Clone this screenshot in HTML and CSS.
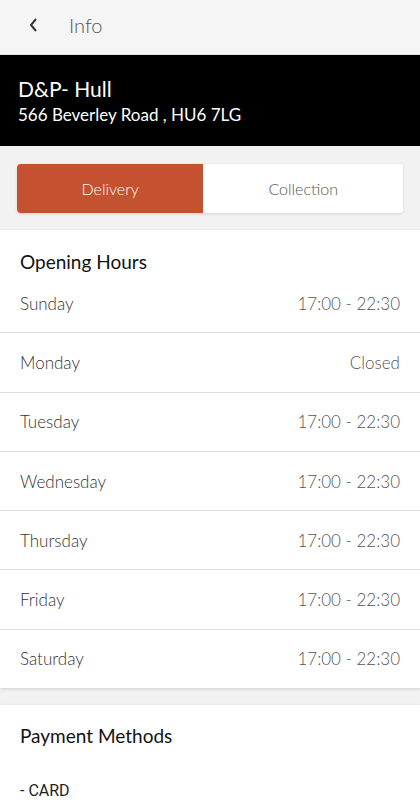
FILE: index.html
```html
<!DOCTYPE html>
<html lang="en">
<head>
<meta charset="UTF-8">
<meta name="viewport" content="width=device-width, initial-scale=1.0">
<title>Info</title>
<link rel="stylesheet" href="styles.css">
</head>
<body>
    <header class="topbar">
        <button class="back" aria-label="Back">
            <svg width="12" height="16" viewBox="0 0 12 16"><path d="M8 2 L3 8 L8 14" fill="none" stroke="#333" stroke-width="2"/></svg>
        </button>
        <span class="topbar-title">Info</span>
    </header>

    <section class="store">
        <h1 class="store-name">D&amp;P- Hull</h1>
        <p class="store-address">566 Beverley Road , HU6 7LG</p>
    </section>

    <div class="tabs">
        <button class="tab active">Delivery</button>
        <button class="tab">Collection</button>
    </div>

    <section class="card">
        <h2 class="card-title">Opening Hours</h2>
        <ul class="hours">
            <li><span>Sunday</span><span>17:00 - 22:30</span></li>
            <li><span>Monday</span><span>Closed</span></li>
            <li><span>Tuesday</span><span>17:00 - 22:30</span></li>
            <li><span>Wednesday</span><span>17:00 - 22:30</span></li>
            <li><span>Thursday</span><span>17:00 - 22:30</span></li>
            <li><span>Friday</span><span>17:00 - 22:30</span></li>
            <li><span>Saturday</span><span>17:00 - 22:30</span></li>
        </ul>
    </section>

    <section class="card payment">
        <h2 class="card-title">Payment Methods</h2>
        <p class="method">- CARD</p>
    </section>
</body>
</html>
```

FILE: styles.css
```css
body {
    font-family: Lato, "Open Sans", sans-serif;
    background-color: #f2f2f2;
    margin: 0;
    color: #333;
}
.topbar {
    display: flex;
    align-items: center;
    height: 55px;
    padding-bottom: 4px;
    box-sizing: border-box;
    background-color: #f5f5f5;
    border-bottom: 1px solid #e2e2e2;
}
.back {
    background: none;
    border: none;
    padding: 0;
    margin-left: 28px;
    width: 12px;
    height: 16px;
    display: flex;
}
.topbar-title {
    margin-left: 29px;
    font-size: 20px;
    font-weight: 300;
    color: #555;
}
.store {
    background-color: #000;
    color: #fff;
    height: 91px;
    padding: 0 18px;
    box-sizing: border-box;
    display: flex;
    flex-direction: column;
    justify-content: center;
}
.store-name {
    margin: 0;
    font-size: 21px;
    font-weight: 400;
    line-height: 28px;
}
.store-address {
    margin: 0;
    font-size: 17px;
    font-weight: 400;
    line-height: 24px;
}
.tabs {
    display: flex;
    margin: 18px 17px 17px;
    height: 49px;
    border-radius: 4px;
    background-color: #fff;
    box-shadow: 0 1px 3px rgba(0, 0, 0, 0.12);
    overflow: hidden;
}
.tab {
    flex: 200;
    border: none;
    background: #fff;
    font-family: inherit;
    font-size: 16px;
    color: #555;
    font-weight: 300;
}
.tab.active {
    flex: 186;
    background-color: #c4512f;
    color: #fff;
}
.card {
    background-color: #fff;
    box-shadow: 0 1px 3px rgba(0, 0, 0, 0.15);
    margin-bottom: 17px;
}
.card-title {
    margin: 0;
    padding: 19px 20px 0;
    font-size: 19px;
    font-weight: 400;
    line-height: 25px;
    color: #111;
}
.hours {
    list-style: none;
    margin: 0;
    padding: 0;
}
.hours li {
    display: flex;
    justify-content: space-between;
    align-items: center;
    height: 58.3px;
    padding: 0 20px;
    border-bottom: 1px solid #ddd;
    font-size: 17px;
    font-weight: 300;
    color: #333;
}
.hours li span:last-child {
    color: #555;
}
.hours li:last-child {
    border-bottom: none;
}
.payment .card-title {
    padding-top: 18px;
}
.method {
    margin: 0;
    padding: 33px 20px 20px;
    font-family: Roboto, sans-serif;
    font-size: 16px;
    color: #222;
}
```
